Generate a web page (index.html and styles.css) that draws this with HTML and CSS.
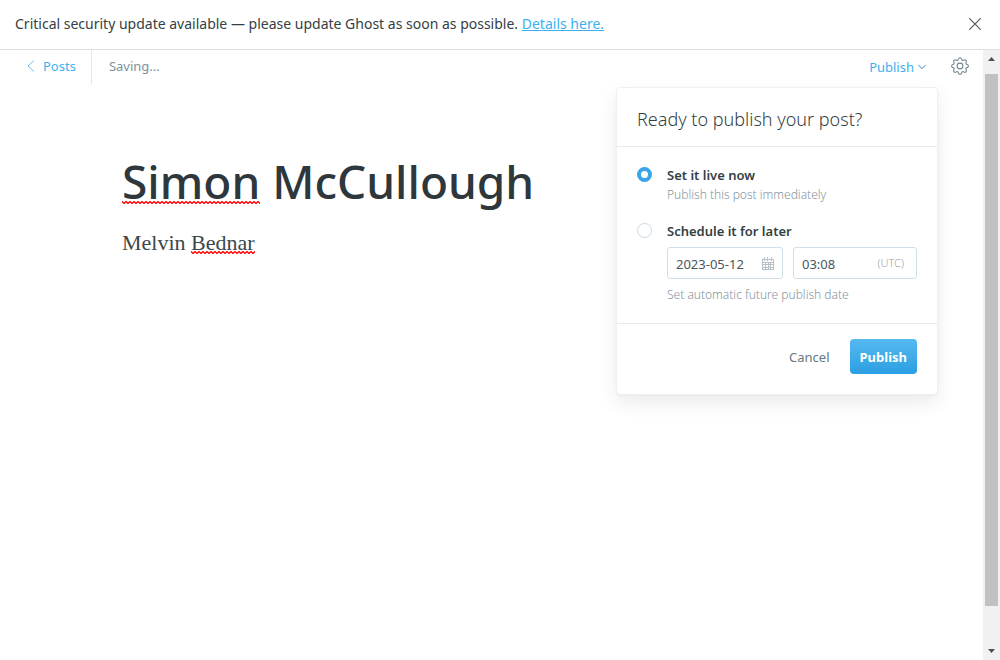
FILE: index.html
```html
<!DOCTYPE html>
<html lang="en">
<head>
<meta charset="utf-8">
<meta name="viewport" content="width=device-width, initial-scale=1">
<title>Post editor</title>
<link rel="stylesheet" href="styles.css">
</head>
<body>
<aside class="alert">
  <p class="alert-text">Critical security update available — please update Ghost as soon as possible. <a href="#">Details here.</a></p>
  <button class="alert-close" type="button" aria-label="Close">
    <svg width="12" height="12" viewBox="0 0 12 12" fill="none" stroke="#54595d" stroke-width="1.2"><path d="M0.3 0.3 11.7 11.7M11.7 0.3 0.3 11.7"/></svg>
  </button>
</aside>
<div class="viewport">
  <main class="editor">
    <header class="editor-header">
      <a class="back" href="#">
        <svg width="8" height="12" viewBox="0 0 8 12" fill="none" stroke="#6cc0f0" stroke-width="1"><path d="M7 0.5 1 6l6 5.5"/></svg>
        Posts
      </a>
      <span class="status">Saving...</span>
      <div class="publish">
        <button class="publish-trigger" type="button">
          Publish
          <svg width="8" height="6" viewBox="0 0 8 6" fill="none" stroke="#3a92c8" stroke-width="1"><path d="M0.3 0.8 4 4.8 7.7 0.8"/></svg>
        </button>
        <form class="menu">
          <h2 class="menu-title">Ready to publish your post?</h2>
          <div class="options">
            <div class="option">
              <input class="radio" type="radio" name="when" id="now" checked>
              <div class="option-body">
                <label class="option-label" for="now">Set it live now</label>
                <p class="hint">Publish this post immediately</p>
              </div>
            </div>
            <div class="option">
              <input class="radio" type="radio" name="when" id="later">
              <div class="option-body">
                <label class="option-label" for="later">Schedule it for later</label>
                <div class="fields">
                  <div class="field">
                    <input class="field-input" type="text" value="2023-05-12" aria-label="Publish date">
                    <svg width="12" height="13" viewBox="0 0 12 13" fill="none" stroke="#b7c1c7" stroke-width="1" shape-rendering="crispEdges"><path d="M0.5 2.5h11v10h-11zM0 5.5h12M0 7.5h12M0 10.5h12M3.5 5v8M6.5 5v8M8.5 5v8M2.5 0v4M5.5 0v4M9.5 0v4"/></svg>
                  </div>
                  <div class="field">
                    <input class="field-input" type="text" value="03:08" aria-label="Publish time">
                    <span class="zone">(UTC)</span>
                  </div>
                </div>
                <p class="hint">Set automatic future publish date</p>
              </div>
            </div>
          </div>
          <footer class="menu-footer">
            <button class="cancel" type="button">Cancel</button>
            <button class="submit" type="submit">Publish</button>
          </footer>
        </form>
      </div>
      <button class="settings" type="button" aria-label="Settings">
        <svg width="18" height="18" viewBox="0 0 18 18" fill="none" stroke="#71858f" stroke-width="1.1"><circle cx="9" cy="9" r="2.9"/><path d="M7.4 2.2C7.6 1 8.1.7 9 .7s1.4.3 1.6 1.5c.2 1.1 1.2 1.6 2.2 1 1-.7 1.6-.5 2.2.1s.8 1.200.1 2.200c-.6.9-.1 1.800.9 2 1.100.2 1.400.7 1.400 1.500s-.3 1.400-1.400 1.600c-1 .2-1.500 1.100-.9 2 .7 1 .5 1.600-.1 2.200s-1.200.8-2.200.1c-1-.6-2-.1-2.200 1-.2 1.100-.7 1.400-1.600 1.400s-1.400-.3-1.600-1.400c-.2-1.100-1.200-1.600-2.200-1-1 .7-1.600.5-2.200-.1s-.8-1.200-.1-2.200c.6-.9.1-1.800-.9-2C.9 10.400.6 9.900.6 9s.3-1.300 1.400-1.500c1-.2 1.500-1.100.9-2-.7-1-.5-1.600.1-2.200s1.200-.8 2.200-.1c1 .6 2 .1 2.200-1z"/></svg>
      </button>
    </header>
    <article class="post">
      <h1 class="post-title"><span class="misspelt">Simon</span> McCullough</h1>
      <p class="post-body">Melvin <span class="misspelt">Bednar</span></p>
    </article>
  </main>
  <div class="scrollbar" aria-hidden="true">
    <svg class="arrow" width="7" height="4" viewBox="0 0 7 4"><path fill="#505050" d="M3.500 0 7 4H0z"/></svg>
    <div class="track"><div class="thumb"></div></div>
    <svg class="arrow" width="7" height="4" viewBox="0 0 7 4"><path fill="#505050" d="M0 0h7L3.500 4z"/></svg>
  </div>
</div>
</body>
</html>
```
FILE: styles.css
```css
* { box-sizing: border-box; }

body {
  display: flex;
  flex-direction: column;
  min-height: 100vh;
  margin: 0;
  background: #fff;
  color: #343f44;
  font: 13px/20px "Noto Sans", "Open Sans", sans-serif;
}

h1, h2, p { margin: 0; }
a { color: #3eb0ef; }
svg { display: block; flex: none; }

button {
  padding: 0;
  border: 0;
  background: none;
  color: inherit;
  font: inherit;
  cursor: pointer;
}

.alert {
  display: flex;
  align-items: center;
  justify-content: space-between;
  height: 50px;
  padding: 0 19px 2px 15px;
  border-bottom: 1px solid #dcdfe1;
}

.alert-text { font-size: 14px; }

.viewport { display: flex; flex: 1; }
.editor { flex: 1; min-width: 0; }

.editor-header {
  display: flex;
  align-items: center;
  height: 34px;
  padding-right: 14px;
}

.back {
  display: flex;
  align-items: center;
  gap: 8px;
  height: 34px;
  padding: 0 15px 2px 27px;
  border-right: 1px solid #dfe8ed;
  text-decoration: none;
}

.status { padding: 0 0 2px 17px; color: #7d919b; }

.publish { position: relative; margin-left: auto; }

.publish-trigger {
  display: flex;
  align-items: center;
  gap: 4px;
  color: #3eb0ef;
}

.settings { padding-bottom: 2px; margin-left: 25px; }

.menu {
  position: absolute;
  top: 30px;
  right: -12px;
  width: 322px;
  border: 1px solid #eef1f3;
  border-radius: 4px;
  background: #fff;
  box-shadow: 0 8px 18px rgba(39, 44, 49, 0.09), 0 1px 3px rgba(39, 44, 49, 0.03);
}

.menu-title {
  padding: 19px 20px 14px;
  border-bottom: 1px solid #e3edf2;
  font-size: 18px;
  font-weight: 300;
  line-height: 25px;
}

.options {
  display: grid;
  gap: 16px;
  padding: 18px 20px;
}

.option { display: flex; gap: 15px; min-width: 0; }
.option-body { flex: 1; min-width: 0; }
.option-label { display: block; font-weight: 600; }

.radio {
  flex: none;
  width: 15px;
  height: 15px;
  margin: 2px 0 0;
  border: 1px solid #c5dbe7;
  border-radius: 50%;
  background: #fff;
  appearance: none;
}

.radio:checked { border: 4px solid #3aa5e8; }

.hint { color: #82959f; font-size: 12px; font-weight: 300; }

.fields {
  display: grid;
  grid-template-columns: minmax(0, 116fr) minmax(0, 124fr);
  gap: 10px;
  margin: 6px 0;
}

.field {
  display: flex;
  align-items: center;
  min-width: 0;
  height: 32px;
  padding: 0 8px;
  border: 1px solid #cfdfe8;
  border-radius: 3px;
}

.field-input {
  flex: 1;
  width: 0;
  min-width: 0;
  padding: 2px 0 0;
  border: 0;
  outline: 0;
  background: none;
  color: #4a565c;
  font: inherit;
}

.zone { padding-right: 4px; color: #98a6ae; font-size: 11px; font-weight: 300; }

.menu-footer {
  display: flex;
  align-items: center;
  justify-content: flex-end;
  gap: 20px;
  padding: 15px 20px 20px;
  border-top: 1px solid #e3edf2;
}

.cancel { padding-top: 1px; color: #667a84; }

.submit {
  padding: 8px 10px 7px;
  border-radius: 4px;
  background: linear-gradient(#56b9f0, #2b9fe2);
  color: #fff;
  font-weight: 700;
}

.post { padding: 67px 122px; }

.post-title {
  color: #2d373c;
  font-size: 46px;
  font-weight: 500;
  line-height: 60px;
}

.post-body {
  margin-top: 16px;
  color: #3d474c;
  font: 22px/32px "Liberation Serif", serif;
}

.misspelt {
  background: url("data:image/svg+xml,%3Csvg xmlns='http://www.w3.org/2000/svg' width='4' height='3'%3E%3Cpath d='M-1 .5 0 .5 2 2.500 4 .5 5 .5' fill='none' stroke='red' stroke-width='1.300'/%3E%3C/svg%3E") repeat-x 0 21px / 4px 3px;
}

.post-title .misspelt { background-position: 0 51px; }

.scrollbar {
  display: flex;
  flex-direction: column;
  align-items: center;
  width: 17px;
  padding: 7px 2px;
  background: #f1f1f1;
}

.track { flex: 1; width: 100%; padding: 13px 0 43px; }
.thumb { height: 100%; background: #c1c1c1; }
```
